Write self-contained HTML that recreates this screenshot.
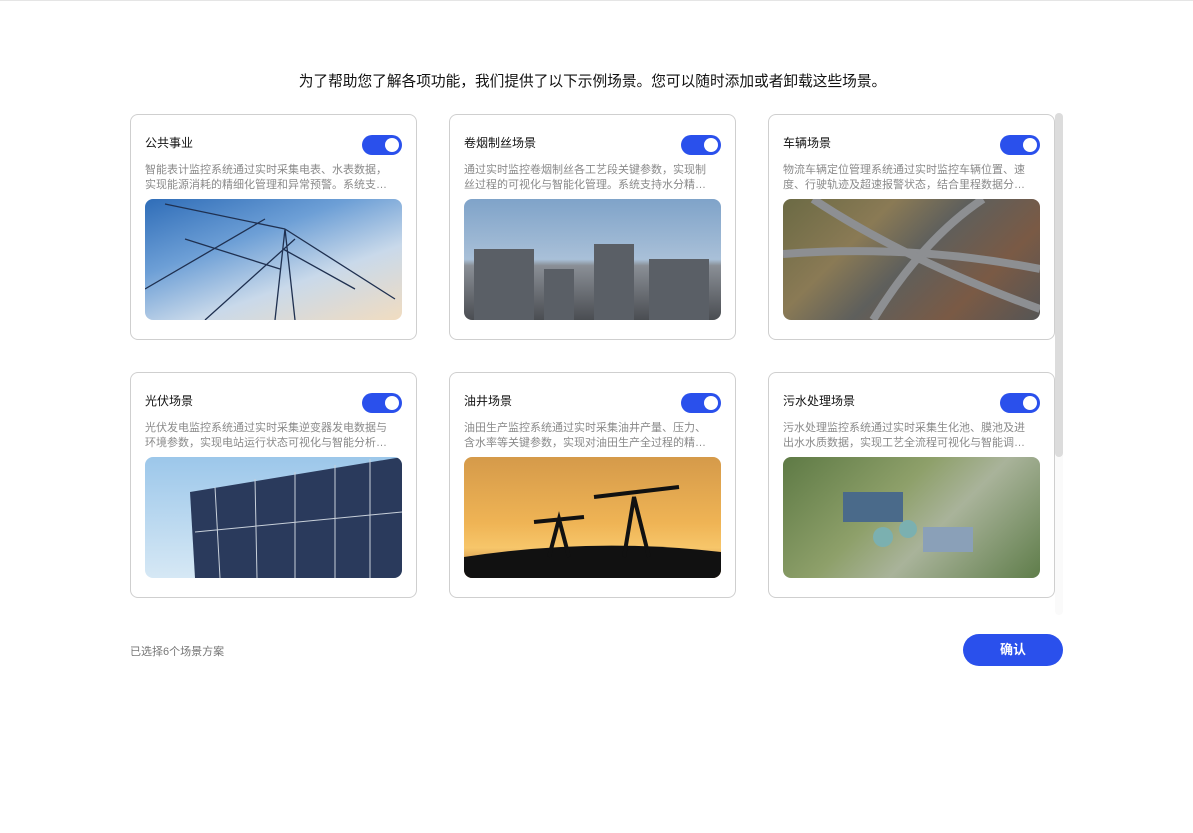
<!DOCTYPE html>
<html><head><meta charset="utf-8"><style>
*{margin:0;padding:0;box-sizing:border-box}
body{width:1193px;height:833px;background:#fff;font-family:"Liberation Sans","Noto Sans CJK SC",sans-serif;position:relative;overflow:hidden}
.line{position:absolute;top:0;left:0;width:1193px;height:1px;background:#e5e5e5}
.h{position:absolute;top:70px;left:-4px;width:1193px;text-align:center;font-size:14.7px;color:#111}
.card{position:absolute;width:287px;height:226px;border:1px solid #cfcfcf;border-radius:8px;background:#fff}
.t{position:absolute;left:14px;top:19px;font-size:12px;color:#111}
.tg{position:absolute;left:231px;top:20px;width:40px;height:20px;border-radius:10px;background:#2a50ec}
.tg:after{content:"";position:absolute;right:3px;top:3px;width:14px;height:14px;border-radius:50%;background:#fff}
.d{position:absolute;left:14px;top:48px;width:248px;font-size:11px;line-height:14.5px;color:#8a8a8a;display:-webkit-box;-webkit-line-clamp:2;-webkit-box-orient:vertical;overflow:hidden}
.im{position:absolute;left:14px;top:84px;width:257px;height:121px;border-radius:8px;overflow:hidden}
.sb{position:absolute;left:1055px;top:113px;width:8px;height:502px;background:#fafafa;border-radius:4px}
.sb i{position:absolute;left:0;top:0;width:8px;height:344px;background:#dcdcdc;border-radius:4px}
.f{position:absolute;left:130px;top:643px;font-size:11px;color:#777}
.btn{position:absolute;left:963px;top:634px;width:100px;height:32px;border-radius:16px;background:#2a50ec;color:#fff;font-size:13px;font-weight:bold;text-align:center;line-height:32px}
</style></head><body>
<div class="line"></div>
<div class="h">为了帮助您了解各项功能，我们提供了以下示例场景。您可以随时添加或者卸载这些场景。</div>

<div class="card" style="left:130px;top:114px"><div class="t">公共事业</div><div class="tg"></div>
<div class="d">智能表计监控系统通过实时采集电表、水表数据，实现能源消耗的精细化管理和异常预警。系统支持多种数据分析功能</div>
<div class="im" style="background:linear-gradient(160deg,#2f6db8 0%,#6d9fd6 35%,#c9d9ea 65%,#f1dcc0 100%)">
<svg width="257" height="121"><g stroke="#1f3050" stroke-width="1.3" fill="none"><path d="M150 121 L140 30 L130 121 M140 30 L20 5 M140 30 L250 100 M135 70 L40 40 M138 50 L210 90 M60 121 L150 40 M0 90 L120 20"/></g></svg></div></div>

<div class="card" style="left:449px;top:114px"><div class="t">卷烟制丝场景</div><div class="tg"></div>
<div class="d">通过实时监控卷烟制丝各工艺段关键参数，实现制丝过程的可视化与智能化管理。系统支持水分精准控制与质量追溯</div>
<div class="im" style="background:linear-gradient(180deg,#7fa3c9 0%,#a9c0d8 50%,#8a8f96 55%,#4a4d52 100%)">
<svg width="257" height="121"><g fill="#5a5f66"><rect x="10" y="50" width="60" height="71"/><rect x="80" y="70" width="30" height="51"/><rect x="130" y="45" width="40" height="76"/><rect x="185" y="60" width="60" height="61"/></g></svg></div></div>

<div class="card" style="left:768px;top:114px"><div class="t">车辆场景</div><div class="tg"></div>
<div class="d">物流车辆定位管理系统通过实时监控车辆位置、速度、行驶轨迹及超速报警状态，结合里程数据分析运营效率</div>
<div class="im" style="background:linear-gradient(135deg,#6b6a44 0%,#8a7a55 30%,#5e5f5c 50%,#7a5a45 75%,#555 100%)">
<svg width="257" height="121"><g stroke="#8d8f92" stroke-width="8" fill="none"><path d="M0 55 Q130 45 257 70"/><path d="M90 121 Q140 40 200 0"/><path d="M30 0 Q120 60 257 110"/></g></svg></div></div>

<div class="card" style="left:130px;top:372px"><div class="t">光伏场景</div><div class="tg"></div>
<div class="d">光伏发电监控系统通过实时采集逆变器发电数据与环境参数，实现电站运行状态可视化与智能分析。系统支持故障预警</div>
<div class="im" style="background:linear-gradient(180deg,#9cc7ea 0%,#d6e8f5 100%)">
<svg width="257" height="121"><polygon points="45,35 257,0 257,121 50,121" fill="#2a3a5c"/><g stroke="#c8d0da" stroke-width="1"><path d="M50 75 L257 55 M70 30 L75 121 M110 22 L112 121 M150 15 L150 121 M190 8 L190 121 M225 2 L225 121"/></g></svg></div></div>

<div class="card" style="left:449px;top:372px"><div class="t">油井场景</div><div class="tg"></div>
<div class="d">油田生产监控系统通过实时采集油井产量、压力、含水率等关键参数，实现对油田生产全过程的精细化管理与控制</div>
<div class="im" style="background:linear-gradient(180deg,#d59a4a 0%,#efb455 55%,#f7c66a 75%,#b0703a 100%)">
<svg width="257" height="121"><path d="M0 100 Q130 80 257 95 L257 121 L0 121Z" fill="#111"/><g stroke="#111" stroke-width="4" fill="none"><path d="M130 40 L215 30 M160 100 L170 40 L185 100 M70 65 L120 60 M85 100 L95 62 L105 100"/></g></svg></div></div>

<div class="card" style="left:768px;top:372px"><div class="t">污水处理场景</div><div class="tg"></div>
<div class="d">污水处理监控系统通过实时采集生化池、膜池及进出水水质数据，实现工艺全流程可视化与智能调度管理</div>
<div class="im" style="background:linear-gradient(135deg,#5e7a45 0%,#8ea06a 40%,#a9b39a 60%,#5f7d4a 100%)">
<svg width="257" height="121"><rect x="60" y="35" width="60" height="30" fill="#4a6a8a"/><circle cx="100" cy="80" r="10" fill="#7bb0b0"/><circle cx="125" cy="72" r="9" fill="#7bb0b0"/><rect x="140" y="70" width="50" height="25" fill="#8aa0b8"/></svg></div></div>

<div class="sb"><i></i></div>
<div class="f">已选择6个场景方案</div>
<div class="btn">确认</div>
</body></html>
